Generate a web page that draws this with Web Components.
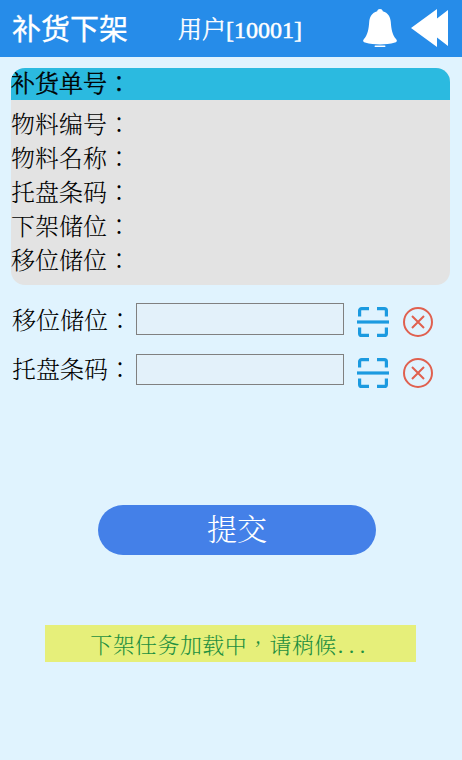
<!DOCTYPE html>
<html>
<head>
<meta charset="utf-8">
<title>补货下架</title>
<style>
    html, body { margin: 0; padding: 0; }
    body { width: 462px; height: 760px; background: #e0f3fe; overflow: hidden; font-family: "Liberation Serif", "AR PL UMing CN", "AR PL UMing TW", "Noto Serif CJK TC", "Noto Sans CJK TC", serif; font-weight: 300; }
</style>
</head>
<body>
<page-header title-text="补货下架" user="用户[10001]"></page-header>
<info-card heading="补货单号：">
    <div>物料编号：</div>
    <div>物料名称：</div>
    <div>托盘条码：</div>
    <div>下架储位：</div>
    <div>移位储位：</div>
</info-card>
<scan-field label="移位储位："></scan-field>
<scan-field label="托盘条码：" short></scan-field>
<submit-button>提交</submit-button>
<status-bar>下架任务加载中，请稍候<span style="letter-spacing: 5.5px; margin-left: 1px">...</span></status-bar>

<script>
(function() {

    class PageHeader extends HTMLElement {
        connectedCallback() {
            this.attachShadow({mode: 'open'});
            this.shadowRoot.innerHTML = `
                <style>
                    :host { display: flex; align-items: center; height: 57px; background: #268ce9; color: #fff; }
                    .title { font: 400 29px "Noto Sans CJK SC", sans-serif; -webkit-text-stroke: 0.3px #fff; width: 178px; padding: 0 0 3px 12px; box-sizing: border-box; white-space: nowrap; }
                    .user { font-size: 24px; -webkit-text-stroke: 0.5px #fff; flex: 1; padding-bottom: 3px; white-space: nowrap; }
                    .icons { display: flex; align-items: center; gap: 14px; padding: 0 14px 1px 0; }
                    svg { display: block; }
                </style>
                <div class="title"></div>
                <div class="user"></div>
                <div class="icons">
                    <svg width="34" height="38" viewBox="0 0 34 38" fill="#fff"><path d="M17 0c1.500 0 2.500 .8 2.800 2.200C25 3.600 27.500 8 27.800 13c.4 7 1.700 13 5.200 17 1.500 1.500 1 3-1 3.600C27 35 22 35.500 17 35.500S7 35 2 33.600C0 33-.5 31.500 1 30c3.500-4 4.800-10 5.200-17C6.500 8 9 3.600 14.200 2.200 14.500 .8 15.500 0 17 0z"/><rect x="11.500" y="36.500" width="11" height="1.500" rx=".75"/></svg>
                    <svg width="37" height="38" viewBox="0 0 37 38" fill="#fff"><path d="M0 19 26 0v9.500L37 1v36L26 28.500V38z"/></svg>
                </div>`;
            this.shadowRoot.querySelector('.title').textContent = this.getAttribute('title-text');
            this.shadowRoot.querySelector('.user').textContent = this.getAttribute('user');
        }
    }

    class InfoCard extends HTMLElement {
        connectedCallback() {
            this.attachShadow({mode: 'open'});
            this.shadowRoot.innerHTML = `
                <style>
                    :host { display: block; margin: 11px 12px 0 11px; border-radius: 14px; overflow: hidden; background: #e3e3e3; color: #000; font-size: 24px; }
                    .head { height: 32px; line-height: 33px; background: #2bbae0; -webkit-text-stroke: 0.5px #000; }
                    .rows { padding: 8px 0 7px; line-height: 34px; }
                </style>
                <div class="head"></div>
                <div class="rows"><slot></slot></div>`;
            this.shadowRoot.querySelector('.head').textContent = this.getAttribute('heading');
        }
    }

    class ScanField extends HTMLElement {
        connectedCallback() {
            this.attachShadow({mode: 'open'});
            this.shadowRoot.innerHTML = `
                <style>
                    :host { display: flex; align-items: flex-start; height: 32px; margin: 18px 0 0 12px; color: #000; font-size: 24px; }
                    :host([short]) { height: 31px; margin-top: 19px; }
                    label { width: 124px; padding-top: 2px; line-height: 32px; white-space: nowrap; }
                    :host([short]) label { padding-top: 1px; line-height: 31px; }
                    input { width: 208px; height: 100%; box-sizing: border-box; margin: 0; padding: 0; border: 1px solid #808080; background: #e3f1fa; }
                    svg { display: block; margin-top: 3px; flex: none; }
                    .scan { margin-left: 13px; }
                    .clear { margin-left: 14px; margin-top: 4px; }
                </style>
                <label></label>
                <input type="text">
                <svg class="scan" width="32" height="32" viewBox="0 0 32 32" fill="none" stroke="#1b9ae0" stroke-width="3.200"><path d="M2.600 10.500V4.600a2 2 0 0 1 2-2H12M20 2.600h7.400a2 2 0 0 1 2 2v5.900M2.600 21.500v5.900a2 2 0 0 0 2 2H12M20 29.400h7.400a2 2 0 0 0 2-2v-5.900"/><path d="M0 16h32"/></svg>
                <svg class="clear" width="30" height="30" viewBox="0 0 30 30" fill="none" stroke="#e0604f" stroke-width="2"><circle cx="15" cy="15" r="14"/><path d="M9 9l12 12M21 9L9 21"/></svg>`;
            this.shadowRoot.querySelector('label').textContent = this.getAttribute('label');
        }
    }

    class SubmitButton extends HTMLElement {
        connectedCallback() {
            this.attachShadow({mode: 'open'});
            this.shadowRoot.innerHTML = `
                <style>
                    :host { display: block; width: 278px; height: 50px; margin: 120px 0 0 98px; border-radius: 25px; background: #4480e8; color: #fff; font-size: 30px; line-height: 50px; text-align: center; }
                </style>
                <slot></slot>`;
        }
    }

    class StatusBar extends HTMLElement {
        connectedCallback() {
            this.attachShadow({mode: 'open'});
            this.shadowRoot.innerHTML = `
                <style>
                    :host { display: block; width: 371px; height: 37px; margin: 70px 0 0 45px; background: #e6ef7a; color: #1f9040; font-size: 22px; line-height: 41px; text-align: center; letter-spacing: 0.4px; }
                </style>
                <slot></slot>`;
        }
    }

    window.customElements.define('page-header', PageHeader);
    window.customElements.define('info-card', InfoCard);
    window.customElements.define('scan-field', ScanField);
    window.customElements.define('submit-button', SubmitButton);
    window.customElements.define('status-bar', StatusBar);

})();
</script>
</body>
</html>
